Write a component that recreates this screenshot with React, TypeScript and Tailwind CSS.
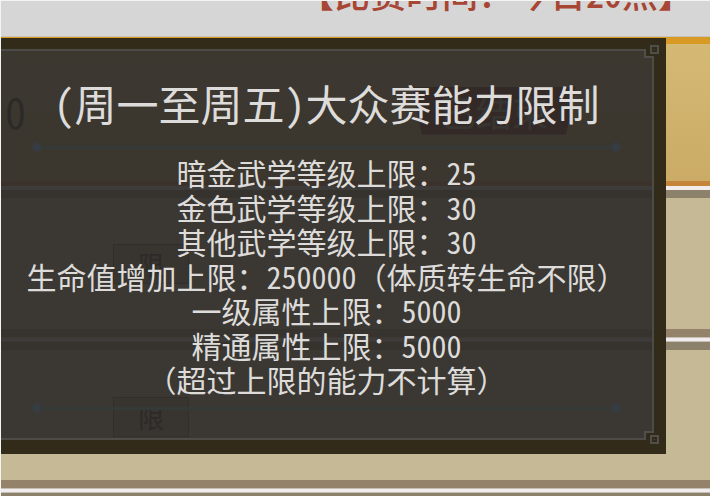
const limits = [
  { label: "暗金武学等级上限：", value: "25" },
  { label: "金色武学等级上限：", value: "30" },
  { label: "其他武学等级上限：", value: "30" },
  { label: "生命值增加上限：", value: "250000", note: "（体质转生命不限）" },
  { label: "一级属性上限：", value: "5000" },
  { label: "精通属性上限：", value: "5000" },
  { label: "（超过上限的能力不计算）" },
];

function Divider() {
  return (
    <div className="mx-8 flex items-center">
      <span className="size-2 rotate-45 bg-[#353c43]" />
      <span className="h-[3px] flex-1 bg-[#343a38]" />
      <span className="size-2 rotate-45 bg-[#353c43]" />
    </div>
  );
}

function Corner({ className }: { className: string }) {
  return (
    <svg viewBox="0 0 20 20" className={`absolute size-5 ${className}`} fill="none" stroke="#504e4a" strokeWidth="2">
      <path d="M5 0H20V14H5Z" fill="#322b1a" stroke="none" />
      <path d="M5 6V14H13V16" />
      <rect x="11" y="3" width="7" height="7" />
      <rect x="14" y="6" width="1" height="1" stroke="none" fill="#504e4a" />
    </svg>
  );
}

function Separator() {
  return (
    <div>
      <div className="h-2 bg-[#94836a]" />
      <div className="h-[5px] border-y border-[#c5bfb8] bg-[#f3ecec]" />
      <div className="h-2 bg-[#8c826b]" />
    </div>
  );
}

function Tag() {
  return (
    <span className="ml-28 flex h-10 w-[76px] items-center justify-center border border-[#54483a] bg-[#a58a75] text-[26px] leading-none text-[#15100e]">
      限
    </span>
  );
}

export default function App() {
  return (
    <main className="relative h-screen overflow-hidden border-t border-l border-[#f4f4f2] bg-[#c6ba96] font-['Noto_Sans_CJK_SC',sans-serif]">
      <header className="flex h-9 items-end justify-end overflow-hidden border-b border-[#c4c2bb] bg-[#d6d6d6] pr-4 pb-[26px]">
        <h1 className="text-[36px] leading-[36px] font-medium whitespace-nowrap text-[#a84635]">
          【比赛时间：今日<span className="[font-feature-settings:'hwid']">20</span>点】
        </h1>
      </header>
      <section className="border-t-[7px] border-b-[5px] border-t-[#d99a25] border-b-[#c4843a] bg-gradient-to-b from-[#d4b974] to-[#cbab66]">
        <div className="flex h-[137px] items-center justify-between pb-1">
          <span className="ml-1 text-[42px] leading-none text-[#17120f] [font-feature-settings:'hwid']">0</span>
          <span className="mr-[134px] flex h-12 w-[164px] items-center justify-center bg-[#6c1210] text-[36px] leading-none text-[#969585] [clip-path:polygon(0_0,100%_0,94%_100%,6%_100%)]">
            已结束
          </span>
        </div>
      </section>
      <div className="h-1 bg-[#f3ecec]" />
      <div className="h-2 bg-[#8c826b]" />
      <section className="flex h-[131px] items-center"><Tag /></section>
      <Separator />
      <section className="flex h-[130px] items-center pt-1"><Tag /></section>
      <Separator />

      <div
        role="dialog"
        aria-labelledby="limit-title"
        className="absolute inset-x-0 top-[37px] mr-11 border-t-[11px] border-r-[12px] border-b-[14px] border-[#322b1a] bg-[#2f2d2a]/92"
      >
        <div className="border-y-2 border-r-2 border-[#4c4b48] pt-[22px] pb-[26px] text-[#dddcda]">
          <h2 id="limit-title" className="text-center text-[42px] leading-[60px] whitespace-nowrap [font-feature-settings:'hwid']">
            (周一至周五)大众赛能力限制
          </h2>
          <div className="pt-[10px]"><Divider /></div>
          <ul className="flex min-h-[245px] flex-col justify-between pt-1 text-center text-[30px] leading-[34px] whitespace-nowrap">
            {limits.map(({ label, value, note }) => (
              <li key={label}>
                {label}
                {value && <span className="[font-feature-settings:'hwid']">{value}</span>}
                {note}
              </li>
            ))}
          </ul>
          <div className="pt-2"><Divider /></div>
        </div>
        <Corner className="-top-[6px] -right-[6px]" />
        <Corner className="-right-[6px] -bottom-[6px] -scale-y-100" />
      </div>
    </main>
  );
}
